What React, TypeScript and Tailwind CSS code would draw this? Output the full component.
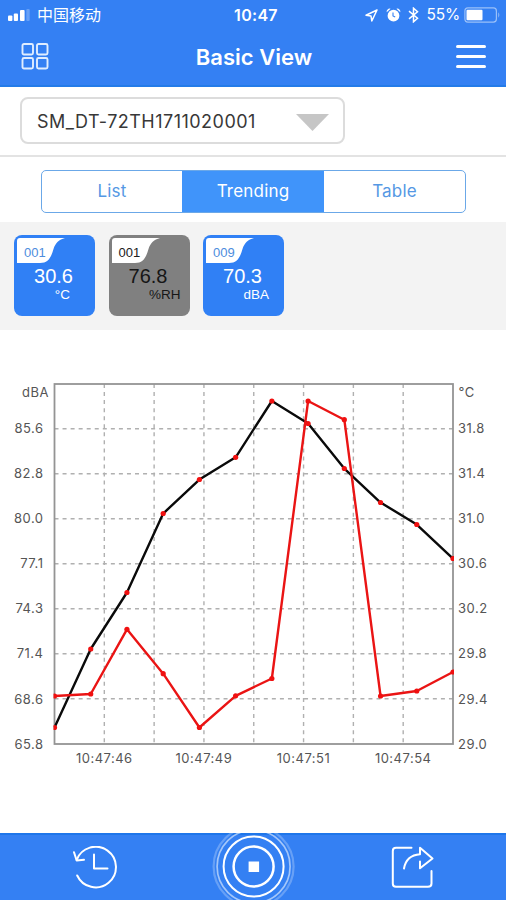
import { useState } from 'react'

const TABS = ['List', 'Trending', 'Table']

const SENSORS = [
  { id: '001', value: '30.6', unit: '°C', active: true, unitPad: 'pr-[25px]' },
  { id: '001', value: '76.8', unit: '%RH', active: false, unitPad: 'pr-[9px]' },
  { id: '009', value: '70.3', unit: 'dBA', active: true, unitPad: 'pr-[15px]' },
]

const LEFT_LABELS = ['85.6', '82.8', '80.0', '77.1', '74.3', '71.4', '68.6', '65.8']
const RIGHT_LABELS = ['31.8', '31.4', '31.0', '30.6', '30.2', '29.8', '29.4', '29.0']
const TIME_LABELS = ['10:47:46', '10:47:49', '10:47:51', '10:47:54']

// plot area
const LEFT = 54.5
const TOP = 54
const WIDTH = 398.5
const HEIGHT = 360
const ROW = HEIGHT / 8
const COL = WIDTH / 8

// y of each sample, in plot pixels
const TEMPERATURE = [397.5, 319, 262.5, 183.5, 149.5, 127.3, 71, 93.5, 138.5, 172.5, 194.5, 228.5]
const NOISE = [366, 364, 299.3, 343.7, 397.5, 365.8, 348.5, 71, 89.7, 366, 361, 342]

const sampleX = (i: number) => LEFT + (i * WIDTH) / 11

function Series({ data, color }: { data: number[]; color: string }) {
  return (
    <g>
      <polyline
        points={data.map((y, i) => `${sampleX(i)},${y}`).join(' ')}
        fill="none"
        stroke={color}
        strokeWidth="2.4"
        strokeLinejoin="round"
      />
      {data.map((y, i) => (
        <circle key={i} cx={sampleX(i)} cy={y} r="2.6" fill="#f01010" />
      ))}
    </g>
  )
}

function TrendChart() {
  return (
    <svg width="506" height="503" viewBox="0 0 506 503" className="font-['Inter',sans-serif] text-[13px] tracking-[0.5px]">
      <defs>
        <clipPath id="plot">
          <rect x={LEFT - 1} y={TOP} width={WIDTH + 2} height={HEIGHT} />
        </clipPath>
      </defs>
      <g stroke="#b0b0b0" strokeWidth="1.4" strokeDasharray="4 4.05">
        {[1, 2, 3, 4, 5, 6, 7].map((n) => (
          <g key={n}>
            <path d={`M${LEFT} ${TOP + n * ROW - 0.3}H${LEFT + WIDTH}`} />
            <path d={`M${LEFT + n * COL} ${TOP}V${TOP + HEIGHT}`} />
          </g>
        ))}
      </g>
      <rect x={LEFT} y={TOP} width={WIDTH} height={HEIGHT} fill="none" stroke="#949494" strokeWidth="1.8" />
      <g clipPath="url(#plot)">
        <Series data={TEMPERATURE} color="#0a0a0a" />
        <Series data={NOISE} color="#ea1414" />
      </g>
      <g fill="#555555">
        <text x="49" y="67" textAnchor="end">dBA</text>
        <text x="458.5" y="67">°C</text>
        {LEFT_LABELS.map((label, i) => (
          <text key={label} x="43.5" y={103.2 + i * 45.05} textAnchor="end">{label}</text>
        ))}
        {RIGHT_LABELS.map((label, i) => (
          <text key={label} x="458" y={103.2 + i * 45.05}>{label}</text>
        ))}
        {TIME_LABELS.map((label, i) => (
          <text key={label} x={LEFT + COL * (1 + i * 2)} y="433" textAnchor="middle">{label}</text>
        ))}
      </g>
    </svg>
  )
}

function StatusBar() {
  return (
    <div className="grid h-[30px] grid-cols-3 items-center text-[16px] leading-none">
      <div className="flex items-center pl-2">
        <svg width="22" height="12" viewBox="0 0 22 12" fill="white">
          <rect x="0" y="6.5" width="4.4" height="5.5" rx="1" />
          <rect x="5.8" y="4.5" width="4.2" height="7.5" rx="1" />
          <rect x="12" y="1" width="4.6" height="11" rx="1" />
          <rect x="18.3" y="0" width="3.4" height="12" rx="1" opacity="0.25" />
        </svg>
        <span className="-mt-0.5 ml-[7px] font-['Noto_Sans_CJK_SC',sans-serif]">中国移动</span>
      </div>
      <span className="pl-1.5 text-center text-[16px] font-semibold tracking-[0.3px]">10:47</span>
      <div className="flex items-center justify-end pr-[5px]">
        <svg width="13" height="13" viewBox="0 0 13 13" fill="none" stroke="white" strokeWidth="1.5" strokeLinejoin="round">
          <path d="M12 1L1 6.200L6 7L6.800 12Z" />
        </svg>
        <svg className="ml-2" width="15" height="14" viewBox="0 0 15 14" fill="white">
          <circle cx="7.5" cy="7.7" r="5.9" />
          <path d="M.7 4.3A3 3 0 0 1 4.6.8zM14.3 4.3A3 3 0 0 0 10.4.8z" />
          <path d="M7 4.5V8L9.200 9" stroke="#3480f3" strokeWidth="1.1" fill="none" />
        </svg>
        <svg className="ml-[7px]" width="11" height="16" viewBox="0 0 11 16" fill="none" stroke="white" strokeWidth="1.5">
          <path d="M1 4.2l8.5 7-4 3.6V1.2l4 3.6-8.5 7" />
        </svg>
        <span className="ml-[8px] text-[15.5px] tracking-[-0.2px]">55%</span>
        <svg className="ml-1" width="37" height="16" viewBox="0 0 37 16">
          <rect x="0.9" y="0.9" width="31.5" height="14.2" rx="3" fill="none" stroke="white" strokeOpacity="0.5" strokeWidth="1.2" />
          <rect x="2.5" y="2.7" width="16" height="10.6" rx="1" fill="white" />
          <path d="M34.3 5.3q2 2.7 0 5.4z" fill="white" opacity="0.5" />
        </svg>
      </div>
    </div>
  )
}

function Header() {
  return (
    <header className="h-[87px] border-b-2 border-[#247be8] bg-[#3480f3] text-white">
      <StatusBar />
      <div className="grid h-[53px] grid-cols-3 items-center">
        <svg className="ml-[21px]" width="28" height="27" viewBox="0 0 28 27" fill="none" stroke="#e0edff" strokeWidth="1.9">
          <rect x="1.5" y="1" width="10.5" height="10.5" rx="1.5" />
          <rect x="16" y="1" width="10.5" height="10.5" rx="1.5" />
          <rect x="1.5" y="15" width="10.5" height="10.5" rx="1.5" />
          <rect x="16" y="15" width="10.5" height="10.5" rx="1.5" />
        </svg>
        <h1 className="whitespace-nowrap pl-[2px] pt-[2px] text-center text-[22px] font-semibold">Basic View</h1>
        <div className="mr-[20px] flex w-[30px] flex-col gap-[7px] justify-self-end">
          <span className="h-[3px] rounded-full bg-white" />
          <span className="h-[3px] rounded-full bg-white" />
          <span className="h-[3px] rounded-full bg-white" />
        </div>
      </div>
    </header>
  )
}

function SensorCard({ sensor }: { sensor: (typeof SENSORS)[number] }) {
  return (
    <div
      className={`h-[81px] w-[81px] rounded-lg pl-[3px] pt-[3px] font-['Liberation_Sans',sans-serif] ${
        sensor.active ? 'bg-[#3080f5] text-white' : 'bg-[#808080] text-[#161616]'
      }`}
    >
      <div className="relative h-[25px]">
        <svg className="absolute left-0 top-0" width="48" height="25" viewBox="0 0 48 25" fill="white">
          <path d="M3 0H48C42 1.500 38.500 5 36.500 11C34 20 31 25 23 25H0V3Q0 0 3 0Z" />
        </svg>
        <span className={`absolute left-[7px] top-[6px] text-[13px] leading-[17px] ${sensor.active ? 'text-[#4d8ddd]' : 'text-[#202020]'}`}>
          {sensor.id}
        </span>
      </div>
      <div className="-ml-[5px] pt-px text-center text-[20px] leading-6">{sensor.value}</div>
      <div className={`text-right text-[13.5px] leading-[14px] ${sensor.unitPad}`}>{sensor.unit}</div>
    </div>
  )
}

function Footer() {
  return (
    <footer className="grid h-[67px] grid-cols-3 items-center border-t-2 border-[#1e76ea] bg-[#3480f3]">
      <svg className="ml-[73px]" width="44" height="44" viewBox="0 0 44 44" fill="none" stroke="white" strokeWidth="2" strokeLinecap="round" strokeLinejoin="round">
        <path d="M3.700 13.800A20.300 20.300 0 1 1 4.200 29.500" />
        <path d="M1 6.200L3.700 14.500L11 13.800" />
        <path d="M21 8.500V22.500H34.500" />
      </svg>
      <svg className="-mt-0.5 justify-self-center" width="84" height="67" viewBox="0 0 84 67" fill="none" stroke="white">
        <circle cx="42.6" cy="33.5" r="40" strokeWidth="2.2" opacity="0.25" />
        <circle cx="42.6" cy="33.5" r="36.500" strokeWidth="1.700" opacity="0.55" />
        <circle cx="42.6" cy="33.5" r="30" strokeWidth="2" />
        <circle cx="42.6" cy="33.5" r="20" strokeWidth="2.500" />
        <rect x="37.6" y="28.5" width="10.5" height="10.5" fill="white" stroke="none" />
      </svg>
      <svg className="mr-[72px] justify-self-end" width="43" height="44" viewBox="0 0 43 44" fill="none" stroke="white" strokeWidth="2" strokeLinecap="round" strokeLinejoin="round">
        <path d="M20.500 1.800H5Q1.800 1.800 1.800 5V37.500Q1.800 40.800 5 40.800H37Q40.500 40.800 40.500 37.500V25" />
        <path d="M13 22.500C14.500 14 20 9 29 8.300V1.800L41.500 12.500L29 22.300V15.500" />
      </svg>
    </footer>
  )
}

export default function App() {
  const [tab, setTab] = useState('Trending')

  return (
    <div className="flex h-[900px] w-[506px] flex-col overflow-hidden bg-white font-['Inter',sans-serif]">
      <Header />
      <div className="h-[70px] border-b-2 border-[#e3e3e3] pl-5 pt-[10px]">
        <button className="flex h-[47px] w-[325px] items-center justify-between rounded-lg border-2 border-[#dcdcdc] pl-[15px] pr-[14px] text-[18px] tracking-[0.48px] text-[#383838]">
          <span className="pt-px">SM_DT-72TH1711020001</span>
          <svg className="mt-1" width="33" height="17" viewBox="0 0 33 17" fill="#c6c6c6">
            <path d="M0 0H33L16.500 17Z" />
          </svg>
        </button>
      </div>
      <div className="h-[65px] pl-[41px] pr-10 pt-[13px]">
        <div className="grid h-[43px] grid-cols-[140px_142px_1fr] overflow-hidden rounded-[5px] border-[1.5px] border-[#6ba8e8]">
          {TABS.map((name) => (
            <button
              key={name}
              onClick={() => setTab(name)}
              className={`pt-px text-[17px] tracking-[0.2px] ${tab === name ? 'bg-[#4094fa] text-white' : 'text-[#5598e4]'}`}
            >
              {name}
            </button>
          ))}
        </div>
      </div>
      <div className="flex h-[108px] gap-[13.500px] bg-[#f3f3f3] pl-[14px] pt-[13px]">
        {SENSORS.map((sensor, i) => (
          <SensorCard key={i} sensor={sensor} />
        ))}
      </div>
      <TrendChart />
      <Footer />
    </div>
  )
}
